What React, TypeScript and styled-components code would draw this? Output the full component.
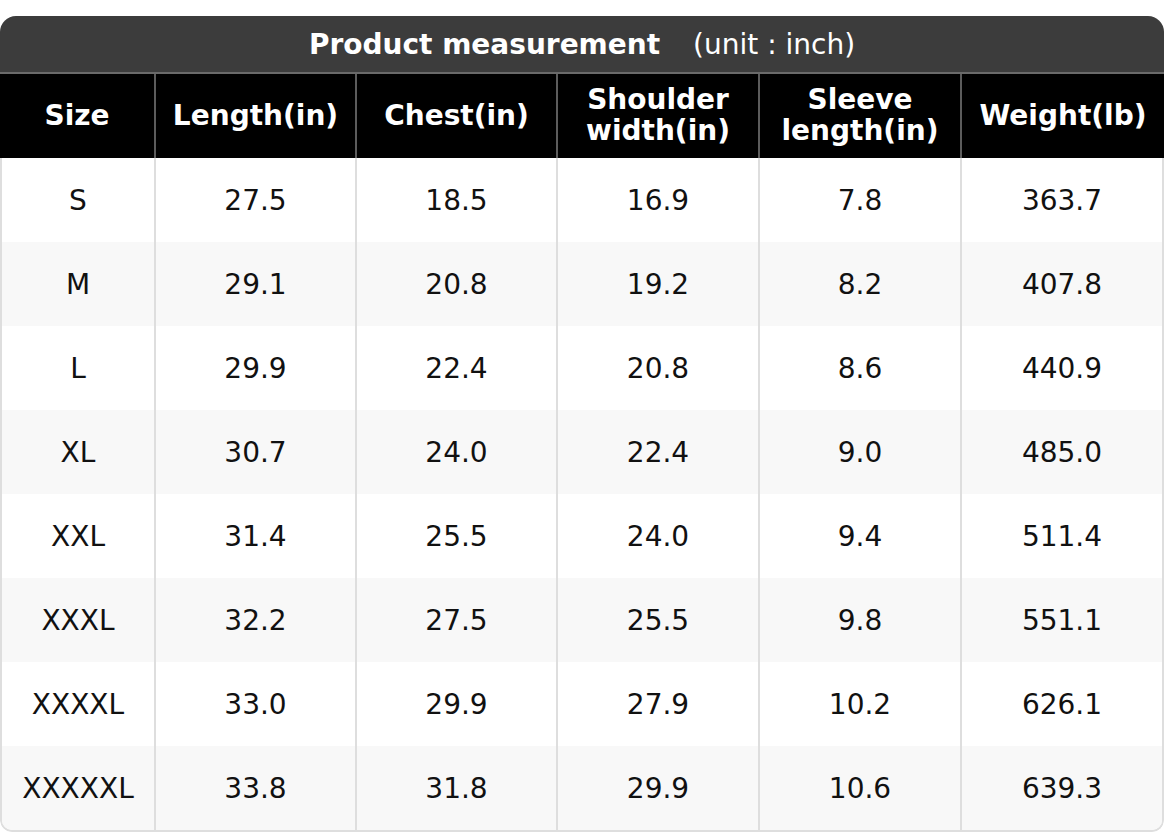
import styled, { createGlobalStyle } from 'styled-components';

const GlobalStyle = createGlobalStyle`
  html, body {
    margin: 0;
    padding: 0;
    background: #ffffff;
  }
  body {
    font-family: 'DejaVu Sans', 'Liberation Sans', sans-serif;
  }
`;

const headers = [
  'Size',
  'Length(in)',
  'Chest(in)',
  'Shoulder width(in)',
  'Sleeve length(in)',
  'Weight(lb)',
];

const rows = [
  ['S', '27.5', '18.5', '16.9', '7.8', '363.7'],
  ['M', '29.1', '20.8', '19.2', '8.2', '407.8'],
  ['L', '29.9', '22.4', '20.8', '8.6', '440.9'],
  ['XL', '30.7', '24.0', '22.4', '9.0', '485.0'],
  ['XXL', '31.4', '25.5', '24.0', '9.4', '511.4'],
  ['XXXL', '32.2', '27.5', '25.5', '9.8', '551.1'],
  ['XXXXL', '33.0', '29.9', '27.9', '10.2', '626.1'],
  ['XXXXXL', '33.8', '31.8', '29.9', '10.6', '639.3'],
];

const App = () => {
  return (
    <>
      <GlobalStyle />
      <StyledPage>
        <StyledCard>
          <StyledTitle>
            <strong>Product measurement</strong>
            <StyledUnit>(unit : inch)</StyledUnit>
          </StyledTitle>

          <StyledHeadRow>
            {headers.map((h) => (
              <StyledHeadCell key={h}>
                {h.includes(' ') ? (
                  <span>
                    {h.split(' ')[0]}
                    <br />
                    {h.split(' ')[1]}
                  </span>
                ) : (
                  h
                )}
              </StyledHeadCell>
            ))}
          </StyledHeadRow>

          <StyledBody>
            {rows.map((row, i) => (
              <StyledRow key={row[0]} $striped={i % 2 === 1}>
                {row.map((value, j) => (
                  <StyledCell key={j}>{value}</StyledCell>
                ))}
              </StyledRow>
            ))}
          </StyledBody>
        </StyledCard>
      </StyledPage>
    </>
  );
};

/**
 * styles
 */
const StyledPage = styled.div`
  width: 1164px;
  padding-top: 16px;
`;

const StyledCard = styled.div`
  width: 1164px;
  border-radius: 16px 16px 12px 12px;
  overflow: hidden;
`;

const StyledTitle = styled.div`
  height: 56px;
  background-color: #3c3c3c;
  border-bottom: 2px solid #6a6a6a;
  color: #ffffff;
  font-size: 28px;
  display: flex;
  align-items: center;
  justify-content: center;

  strong {
    font-weight: bold;
  }
`;

const StyledUnit = styled.span`
  margin-left: 33px;
  font-weight: normal;
`;

const StyledHeadRow = styled.div`
  display: grid;
  grid-template-columns: 154px 201px 201px 202px 202px 1fr;
  height: 84px;
  background-color: #000000;
`;

const StyledHeadCell = styled.div`
  display: flex;
  align-items: center;
  justify-content: center;
  text-align: center;
  color: #ffffff;
  font-size: 28px;
  font-weight: bold;
  line-height: 1.1;

  & + & {
    border-left: 2px solid #5c5c5c;
  }
`;

const StyledBody = styled.div`
  border: 2px solid #dedede;
  border-top: none;
  border-radius: 0 0 12px 12px;
  overflow: hidden;
`;

const StyledRow = styled.div<{ $striped: boolean }>`
  display: grid;
  grid-template-columns: 152px 201px 201px 202px 202px 1fr;
  height: 84px;
  background-color: ${({ $striped }) => ($striped ? '#f8f8f8' : '#ffffff')};
`;

const StyledCell = styled.div`
  display: flex;
  align-items: center;
  justify-content: center;
  color: #111111;
  font-size: 28px;

  & + & {
    border-left: 2px solid #dedede;
  }
`;

export default App;
